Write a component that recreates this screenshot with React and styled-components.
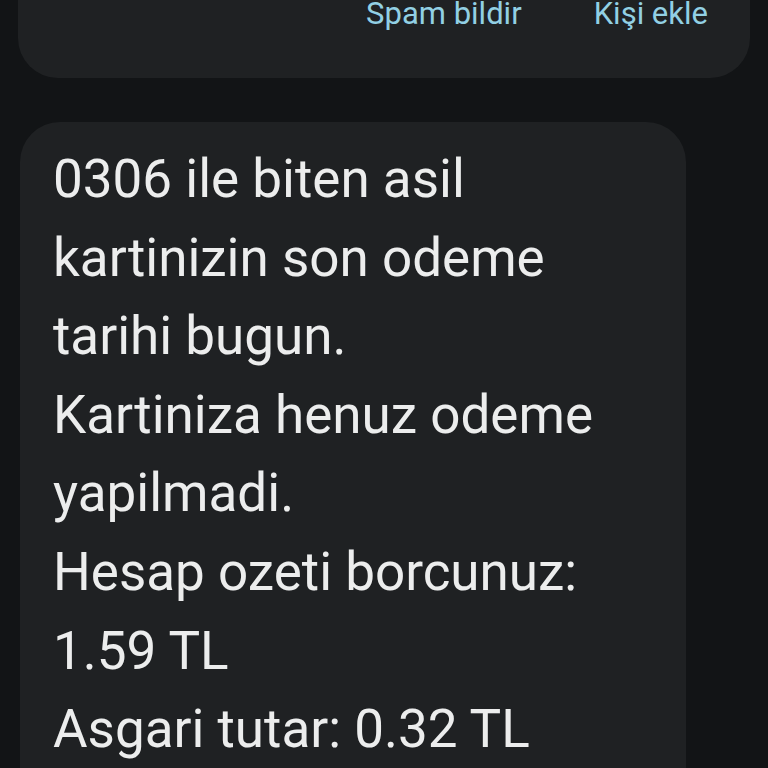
import React from "react";
import styled, { createGlobalStyle } from "styled-components";

const GlobalStyle = createGlobalStyle`
  html, body {
    margin: 0;
    padding: 0;
    background: #121416;
    overflow: hidden;
  }
  body {
    font-family: Roboto, "Noto Sans", sans-serif;
  }
`;

const Screen = styled.div`
  width: 768px;
  height: 768px;
  background: #121416;
  display: flex;
  flex-direction: column;
  overflow: hidden;
`;

const SenderCard = styled.div`
  margin: 0 18px;
  height: 78px;
  background: #1f2123;
  border-radius: 0 0 40px 40px;
  display: flex;
  justify-content: flex-end;
  align-items: flex-start;
  gap: 72px;
  padding-right: 42px;
  box-sizing: border-box;
  flex-shrink: 0;
`;

const ActionButton = styled.button`
  background: none;
  border: none;
  padding: 0;
  margin: 0;
  font-family: Roboto, "Noto Sans", sans-serif;
  font-size: 31px;
  line-height: 28px;
  color: #92d0e4;
  cursor: pointer;
`;

const Bubble = styled.div`
  margin: 44px 0 0 20px;
  width: 666px;
  flex: 1;
  background: #1f2123;
  border-radius: 40px 40px 0 0;
  padding: 18px 0 0 33px;
  box-sizing: border-box;
`;

const MessageLine = styled.div`
  font-size: 53px;
  line-height: 78.6px;
  color: #eceded;
  white-space: nowrap;
`;

const lines = [
  "0306 ile biten asil",
  "kartinizin son odeme",
  "tarihi bugun.",
  "Kartiniza henuz odeme",
  "yapilmadi.",
  "Hesap ozeti borcunuz:",
  "1.59 TL",
  "Asgari tutar: 0.32 TL",
];

const App = () => {
  return (
    <>
      <GlobalStyle />
      <Screen>
        <SenderCard>
          <ActionButton>Spam bildir</ActionButton>
          <ActionButton>Kişi ekle</ActionButton>
        </SenderCard>
        <Bubble>
          {lines.map((l) => (
            <MessageLine key={l}>{l}</MessageLine>
          ))}
        </Bubble>
      </Screen>
    </>
  );
};

export default App;
